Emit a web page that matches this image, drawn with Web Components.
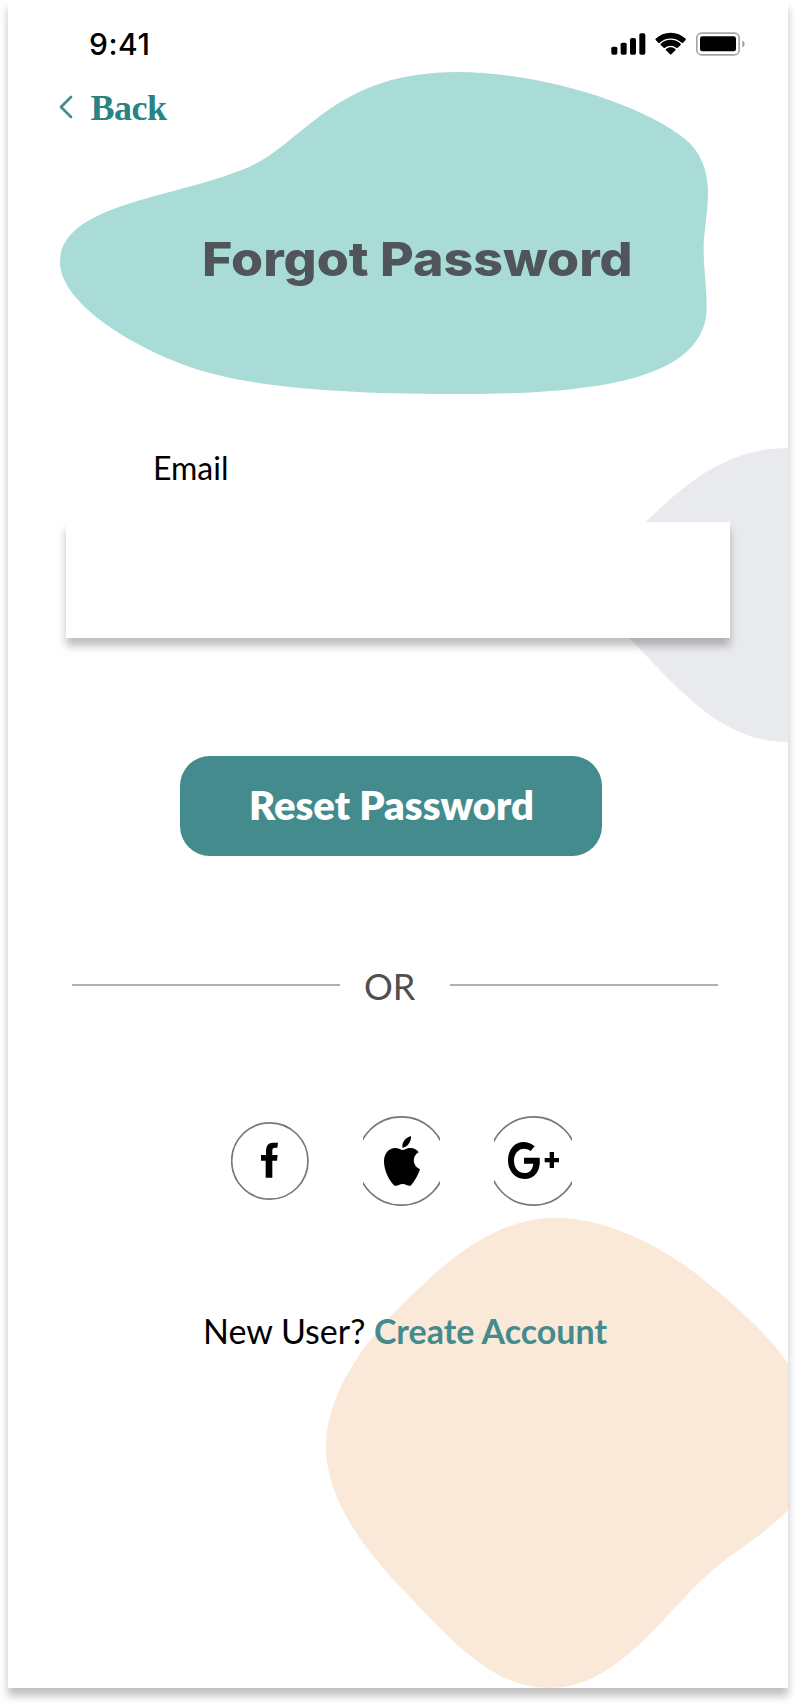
<!DOCTYPE html>
<html lang="en">
<head>
<meta charset="utf-8">
<title>Forgot Password</title>
<style>
html, body { margin: 0; background: #fff; }
body { height: 1704px; overflow: hidden; font-family: Lato, "Liberation Sans", sans-serif; }
</style>
</head>
<body>
<phone-screen>
  <background-blobs slot="backdrop"></background-blobs>
  <status-bar>9:41</status-bar>
  <back-link>Back</back-link>
  <page-title>Forgot Password</page-title>
  <text-field>Email</text-field>
  <primary-button>Reset Password</primary-button>
  <or-divider>OR</or-divider>
  <social-row></social-row>
  <signup-prompt>New User?<span slot="action">Create Account</span></signup-prompt>
</phone-screen>
<script>
function define(name, html) {
  customElements.define(name, class extends HTMLElement {
    constructor() {
      super();
      this.attachShadow({ mode: 'open' }).innerHTML = html;
    }
  });
}

define('phone-screen', `
<style>
:host { display: block; position: relative; margin: 0 8px; height: 1688px; background: #fff; box-shadow: 0 8px 8px rgba(0,0,0,.25); }
main { position: relative; display: flex; flex-direction: column; }
</style>
<slot name="backdrop"></slot><main><slot></slot></main>`);

define('background-blobs', `
<style>:host { position: absolute; inset: 0; overflow: hidden; } svg { display: block; }</style>
<svg width="780" height="1688" viewBox="8 0 780 1688">
<path fill="#a9dcd7" d="M60 262C60 203 178 198 249 167C305 142 335 72 457 72C540 72 642 104 685 139C700 151 708 170 708 192C708 212 703.600 232 703.600 250C703.600 268 706.700 288 706.700 307C706.700 375 610 394 465 394C360 394 257 390 190 367C123 343 60 300 60 262Z"/>
<path fill="#e9eaee" d="M790 448C740 448 700 468 646 521.700C600 568 600 608 629.500 638.300C690 702 726 742 790 742Z"/>
<path fill="#fae9d8" d="M556.700 1217.700C490 1217.700 440 1267 400 1306.700C350 1357 326 1405 326 1447C326 1500 366 1551 400 1586.700C450 1638 490 1688 550 1688C612 1688 655 1626 700 1581.700C728 1554 765 1535 788 1510C820 1470 820 1410 788 1363.300C766 1332 735 1305 700 1276.700C655 1241 600 1217.700 556.700 1217.700Z"/></svg>`);

define('status-bar', `
<style>
:host { display: flex; box-sizing: border-box; height: 88px; padding: 0 42px 0 81px; align-items: center; justify-content: space-between; font: 500 30px/34px Inter, sans-serif; letter-spacing: .5px; color: #000; }
svg { display: block; }
</style>
<span><slot></slot></span>
<svg width="136" height="28" viewBox="60 90 408 84">
<rect x="64" y="140" width="18" height="24" rx="5"/><rect x="92" y="128" width="18" height="36" rx="5"/><rect x="120" y="114" width="18" height="50" rx="5"/><rect x="148" y="100" width="18" height="64" rx="5"/>
<path d="M242 98c17 0 33 6 45 18 1 1 1 3 0 4l-8 8c-1 1-3 1-4 0-18-17-48-17-66 0-1 1-3 1-4 0l-8-8c-1-1-1-3 0-4 12-12 28-18 45-18z"/>
<path d="M242 119c11 0 22 4 30 12 1 1 1 3 0 4l-9 8c-1 1-3 1-4 0-10-8-24-8-34 0-1 1-3 1-4 0l-9-8c-1-1-1-3 0-4 8-8 19-12 30-12z"/>
<path d="M242 142c5 0 10 2 14 5 1 1 1 3 0 4l-12 12c-1 1-3 1-4 0l-12-12c-1-1-1-3 0-4 4-3 9-5 14-5z"/>
<rect x="320.500" y="99.500" width="127" height="65" rx="14" fill="none" stroke="#a6a6a6" stroke-width="5"/>
<rect x="330" y="109" width="108" height="45" rx="7"/><path d="M457 121q7 4 7 11t-7 11z" fill="#a0a0a0"/>
</svg>`);

define('back-link', `
<style>
:host { display: flex; align-items: center; gap: 18px; height: 38px; padding-left: 51px; color: #2a8282; font: bold 36px/40px "Liberation Serif", serif; letter-spacing: -0.5px; }
span { padding-top: 2px; margin-left: -.5px; }
</style>
<svg width="14" height="24" viewBox="177 285 42 72"><path d="M213 291L183 321L213 351" fill="none" stroke="#448b8d" stroke-width="8" stroke-linecap="round" stroke-linejoin="round"/></svg>
<span><slot></slot></span>`);

define('page-title', `
<style>:host { display: block; margin-top: 103px; padding-left: 194px; font: 800 47px/60px Inter, sans-serif; color: #50555c; white-space: nowrap; }
span { display: inline-block; transform: scaleX(1.104); transform-origin: 0 50%; }</style><span><slot></slot></span>`);

define('text-field', `
<style>
:host { display: block; margin: 159px 58px 0; }
label { display: block; padding-left: 87px; font-size: 32px; line-height: 40px; color: #000; }
input { display: block; box-sizing: border-box; width: 664px; height: 116px; margin-top: 34px; border: 0; background: #fff; box-shadow: 0 8px 8px rgba(0,0,0,.25); }
</style>
<label for="f"><slot></slot></label><input id="f" type="email">`);

define('primary-button', `
<style>
:host { display: block; margin: 118px 0 0 172px; }
button { display: block; box-sizing: border-box; width: 422px; height: 100px; padding: 0 0 3px 1px; border: 0; border-radius: 30px; background: #448b8d; color: #fff; font: 800 40px/48px Lato, sans-serif; }
</style><button><slot></slot></button>`);

define('or-divider', `
<style>
:host { display: grid; grid-template-columns: 268px 110px 268px; align-items: center; height: 50px; margin: 104px 0 0 64px; font-size: 36px; line-height: 46px; color: #4f4f4f; }
i { height: 2px; background: #acb0bc; }
span { padding: 2px 0 0 24px; }
</style><i></i><span><slot></slot></span><i></i>`);

define('social-row', `
<style>
:host { display: flex; gap: 54px; height: 90px; margin-top: 106px; padding-left: 223px; }
svg { display: block; }
circle { fill: none; stroke: #777; stroke-width: 5; }
</style>
<svg width="78" height="90" viewBox="63 48 234 270"><circle cx="179.500" cy="183" r="114.500"/>
<path d="M153 165H168V151Q169 128 188 128H204L202 143H195Q187 143 187 151V165H203L201 182H187V233H167V182H153Z"/></svg>
<svg width="77" height="90" viewBox="459 48 231 270"><circle cx="574" cy="183" r="132.500"/>
<path d="M603 108C604 125 593 142 577 143C575 127 587 112 603 108Z"/>
<path d="M578 150C585 150 591 143 602 144C612 144 621 149 626 157C604 169 608 199 630 208C624 226 613 245 604 255C596 262 590 252 578 252C566 252 560 262 551 255C536 239 522 211 522 184C522 159 538 144 555 144C566 144 573 150 578 150Z"/></svg>
<svg width="78" height="90" viewBox="852 48 234 270"><circle cx="970" cy="183" r="132.500"/>
<path d="M974 139L962 153C938 136 912 153 912 181C912 207 927 219 943 219C959 219 968 209 970 191H942V173H989C993 212 975 237 943 237C915 237 894 213 894 181C894 133 938 110 974 139Z"/>
<path d="M1019 156H1032V174H1047V187H1032V204H1019V187H1004V174H1019Z"/></svg>`);

define('signup-prompt', `
<style>
:host { display: flex; gap: 8.5px; margin-top: 105px; padding-left: 195px; font-size: 34px; line-height: 40px; color: #000; white-space: nowrap; }
b { color: #448b8d; font-weight: 700; }
</style><span><slot></slot></span><b><slot name="action"></slot></b>`);
</script>
</body>
</html>
